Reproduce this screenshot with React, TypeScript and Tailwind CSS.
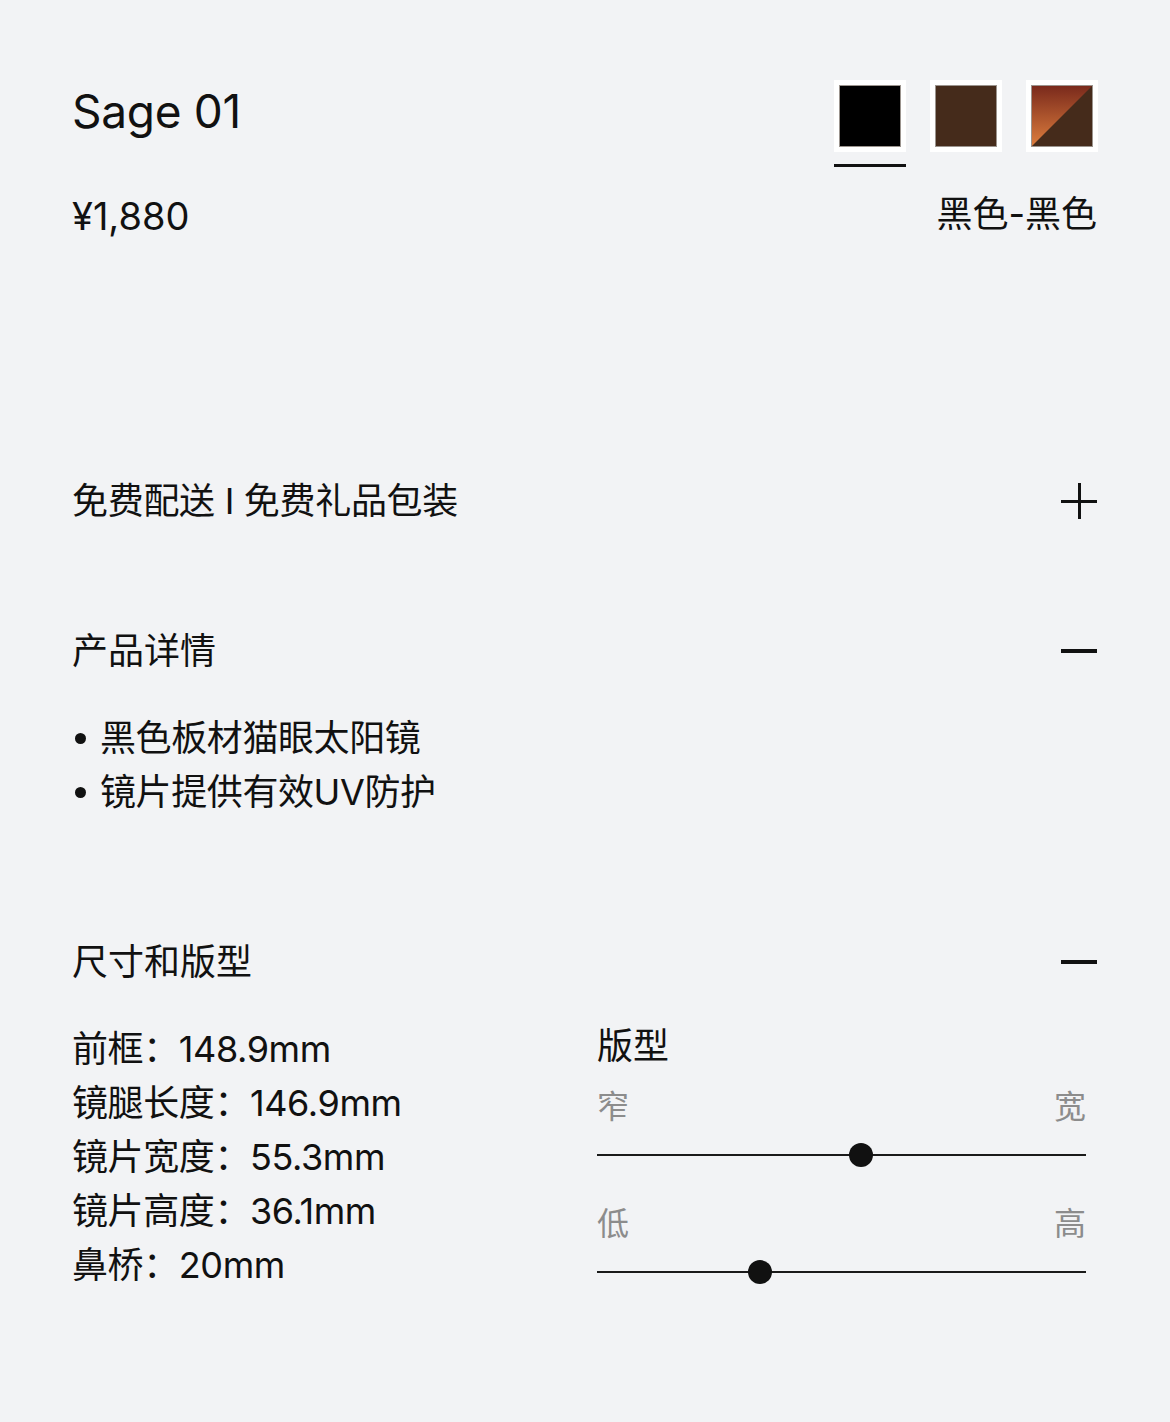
import React from "react";

const Swatch = ({ children, active }: { children: React.ReactNode; active?: boolean }) => (
  <div className="flex flex-col">
    <div className="w-[72px] h-[72px] bg-white p-[5px]">
      <div className="w-full h-full border border-[#9b948e] overflow-hidden">{children}</div>
    </div>
    <div className={`mt-[12px] h-[3px] w-[72px] ${active ? "bg-[#111111]" : "bg-transparent"}`} />
  </div>
);

const Plus = () => (
  <div className="relative w-[36px] h-[36px]">
    <div className="absolute left-0 top-[16.5px] w-[36px] h-[3px] bg-[#111111]" />
    <div className="absolute top-0 left-[16.5px] h-[36px] w-[3px] bg-[#111111]" />
  </div>
);

const Minus = () => (
  <div className="relative w-[36px] h-[36px] flex items-center">
    <div className="w-[36px] h-[3.5px] bg-[#111111]" />
  </div>
);

const Slider = ({ left, right, thumb }: { left: string; right: string; thumb: string }) => (
  <div>
    <div className="flex justify-between text-[32px] leading-[40px] text-[#8c8c8c]">
      <span>{left}</span>
      <span>{right}</span>
    </div>
    <div className="relative mt-[16px] h-[24px] flex items-center">
      <div className="w-full h-[2.5px] bg-[#1a1a1a]" />
      <div className={`absolute top-0 ${thumb} w-[24px] h-[24px] rounded-full bg-[#111111]`} />
    </div>
  </div>
);

export default function App() {
  return (
    <div className="min-h-[1422px] w-full bg-[#f2f3f5] text-[#111111] px-[73px] pt-[80px] pb-[100px] font-[family-name:Inter,'Noto_Sans_CJK_SC',sans-serif]">
      {/* Header */}
      <div className="flex justify-between items-start">
        <div className="-ml-[1px]">
          <h1 className="mt-[7px] text-[46px] leading-[48px] font-normal tracking-[-0.3px]">Sage 01</h1>
          <p className="mt-[57px] text-[38px] leading-[48px]">¥1,880</p>
        </div>
        <div className="flex flex-col items-end -mr-[1px]">
          <div className="flex gap-[24px]">
            <Swatch active>
              <div className="w-full h-full bg-black" />
            </Swatch>
            <Swatch>
              <div className="w-full h-full bg-[#452b1b]" />
            </Swatch>
            <Swatch>
              <svg viewBox="0 0 60 60" className="w-full h-full block" preserveAspectRatio="none">
                <defs>
                  <linearGradient id="g3" x1="0" y1="0" x2="0" y2="1">
                    <stop offset="0" stopColor="#7a2a1c" />
                    <stop offset="1" stopColor="#dd7d3d" />
                  </linearGradient>
                </defs>
                <rect width="60" height="60" fill="#452b1b" />
                <polygon points="0,0 60,0 0,60" fill="url(#g3)" />
              </svg>
            </Swatch>
          </div>
          <p className="mt-[23px] text-[36px] leading-[48px] text-right mr-[1px]">黑色-黑色</p>
        </div>
      </div>

      {/* Shipping */}
      <section className="mt-[237px]">
        <div className="h-[48px] flex items-center justify-between">
          <span className="text-[36px] leading-[48px] -ml-[1px] tracking-[-0.3px]">免费配送 I 免费礼品包装</span>
          <Plus />
        </div>
      </section>

      {/* Product details */}
      <section className="mt-[102px]">
        <div className="h-[48px] flex items-center justify-between">
          <span className="text-[36px] leading-[48px] -ml-[1px]">产品详情</span>
          <Minus />
        </div>
        <ul className="mt-[36px] text-[36px] leading-[54px]">
          {["黑色板材猫眼太阳镜", "镜片提供有效UV防护"].map((t) => (
            <li key={t} className="flex items-center">
              <span className="ml-[2px] mr-[14px] w-[11px] h-[11px] rounded-full bg-[#111111] shrink-0" />
              <span className="tracking-[-0.4px]">{t}</span>
            </li>
          ))}
        </ul>
      </section>

      {/* Size & fit */}
      <section className="mt-[119px]">
        <div className="h-[48px] flex items-center justify-between">
          <span className="text-[36px] leading-[48px] -ml-[1px]">尺寸和版型</span>
          <Minus />
        </div>
        <div className="mt-[36px] grid grid-cols-[524px_489px]">
          <div className="text-[36px] leading-[54px] -ml-[1px] tracking-[-0.4px]">
            <p>前框：148.9mm</p>
            <p>镜腿长度：146.9mm</p>
            <p>镜片宽度：55.3mm</p>
            <p>镜片高度：36.1mm</p>
            <p>鼻桥：20mm</p>
          </div>
          <div>
            <p className="text-[36px] leading-[48px]">版型</p>
            <div className="mt-[17px]">
              <Slider left="窄" right="宽" thumb="left-[252px]" />
            </div>
            <div className="mt-[37px]">
              <Slider left="低" right="高" thumb="left-[151px]" />
            </div>
          </div>
        </div>
      </section>
    </div>
  );
}
